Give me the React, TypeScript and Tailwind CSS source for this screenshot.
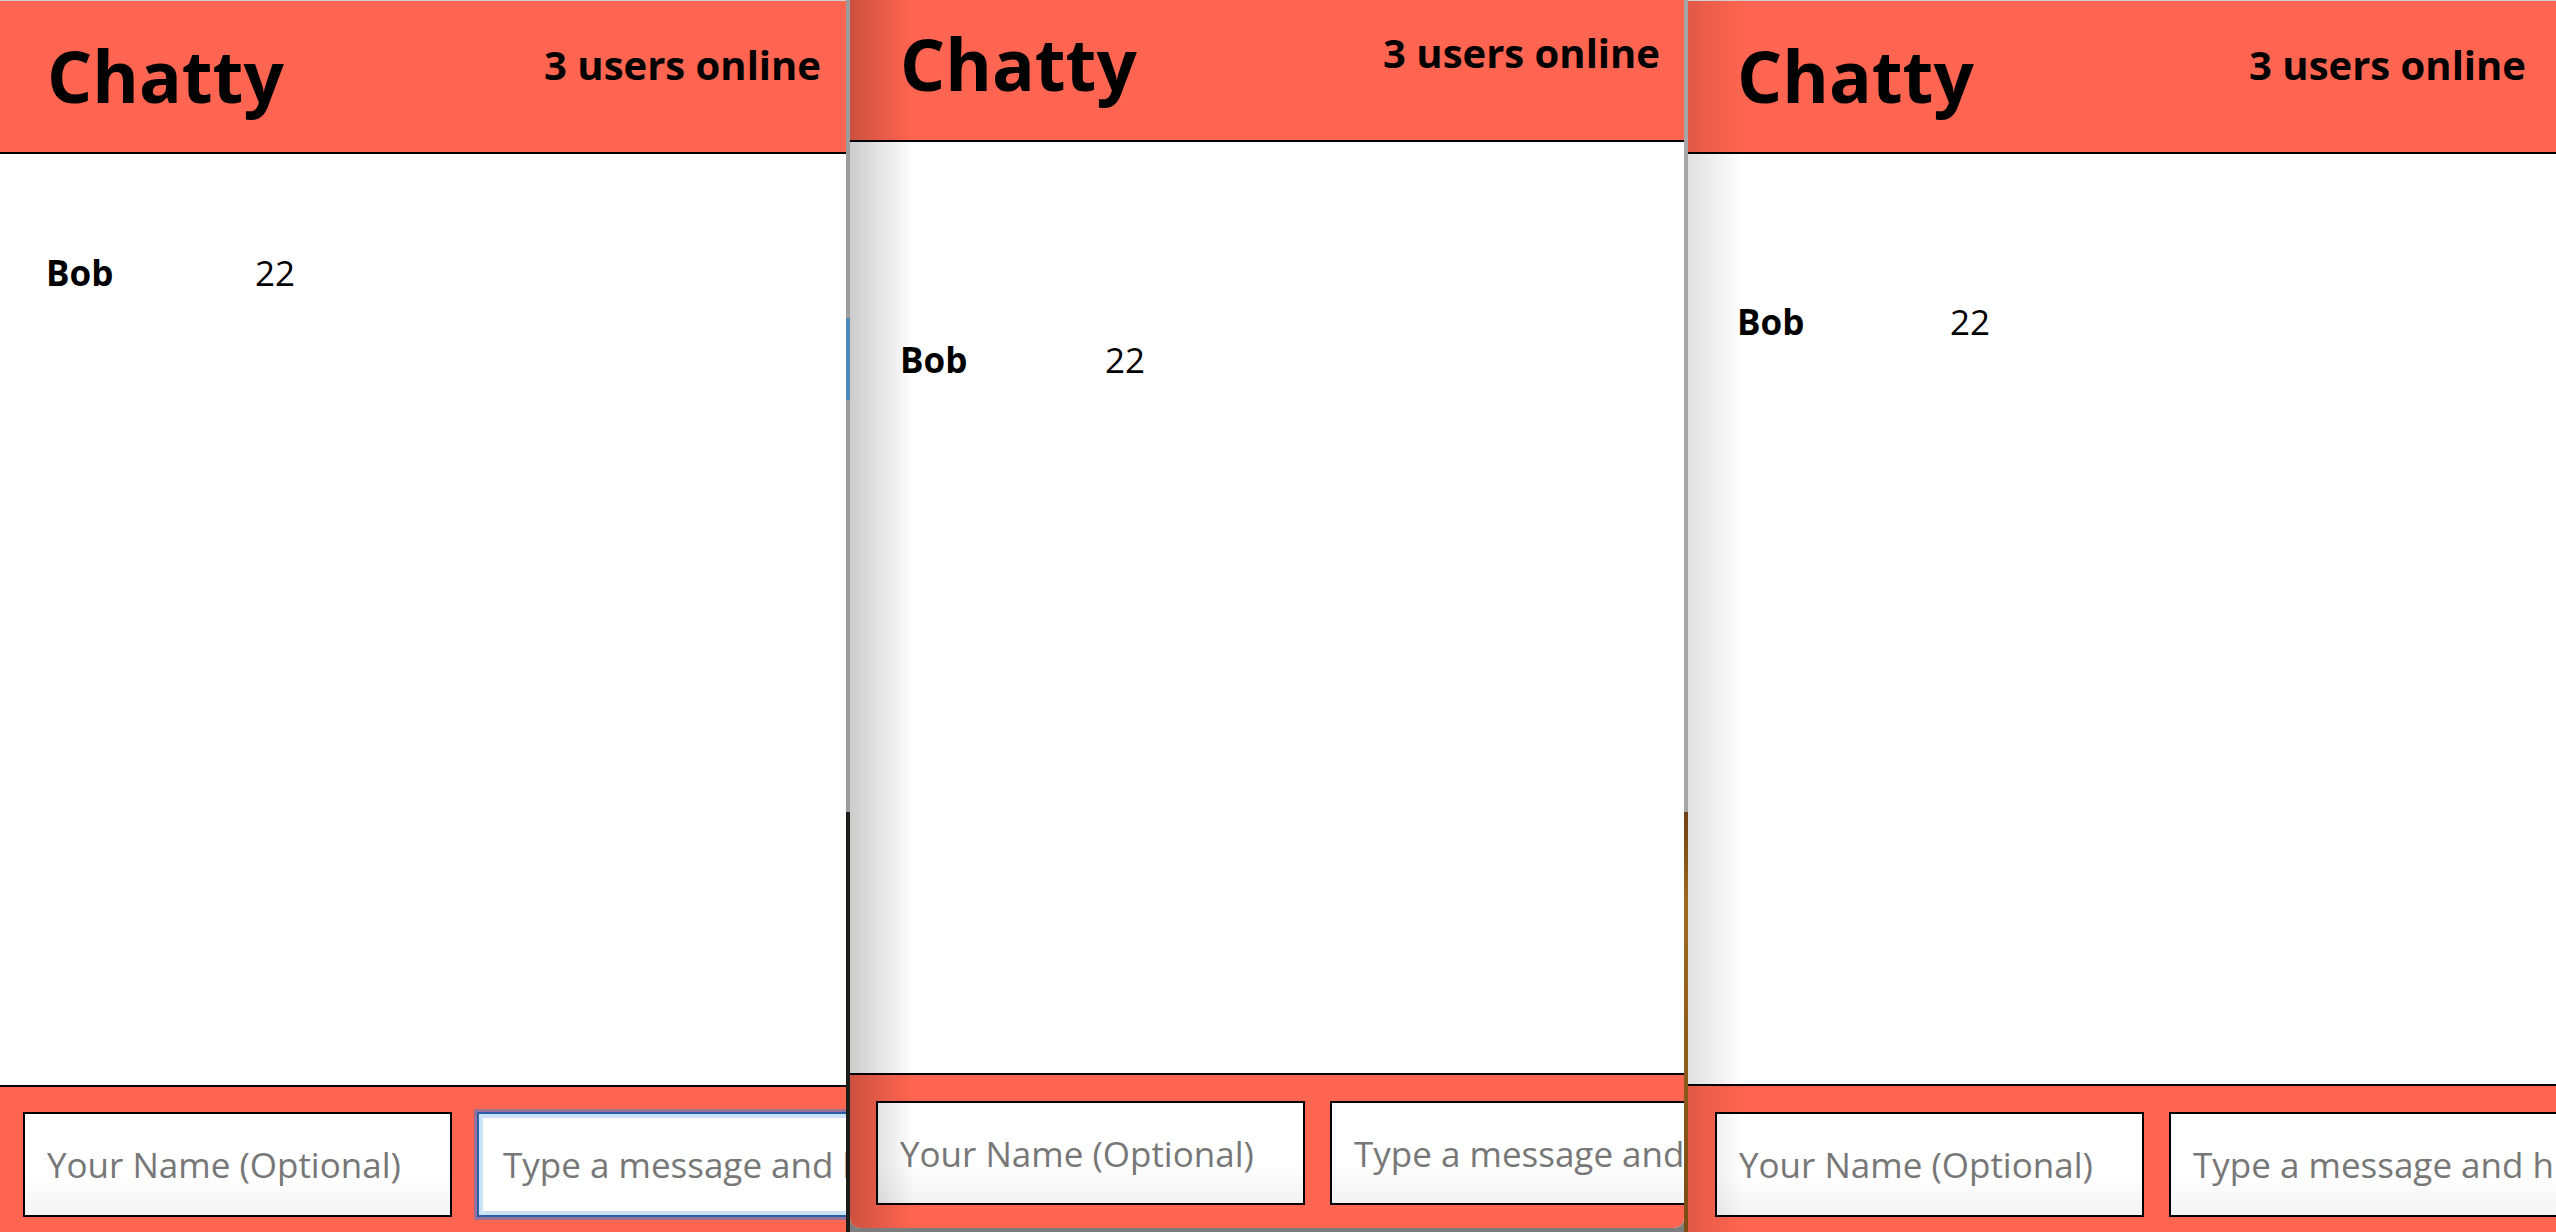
import React from 'react';

type ChatWindowProps = {
  frameClass: string
  headerClass: string
  usersClass: string
  listClass: string
  userColClass: string
  footerClass: string
  inputClass: string
  focused?: boolean
  shadeClass?: string
}

function ChatWindow({
  frameClass,
  headerClass,
  usersClass,
  listClass,
  userColClass,
  footerClass,
  inputClass,
  focused,
  shadeClass,
}: ChatWindowProps) {
  return (
    <div className={`relative flex flex-col overflow-hidden bg-white ${frameClass}`}>
      <header className={`flex shrink-0 items-start justify-between border-b-2 border-b-black bg-[#ff6550] ${headerClass}`}>
        <h1 className="text-[71px] font-bold leading-none text-black">Chatty</h1>
        <span className={`text-[40px] font-bold leading-none text-black ${usersClass}`}>3 users online</span>
      </header>

      <main className={`flex-1 ${listClass}`}>
        <div className="flex text-[35px] leading-none text-black">
          <span className={`font-bold ${userColClass}`}>Bob</span>
          <span>22</span>
        </div>
      </main>

      <footer className={`flex shrink-0 gap-[25px] border-t-2 border-black bg-[#ff6550] ${footerClass}`}>
        <input
          className={`w-[429px] shrink-0 border-2 border-black bg-[linear-gradient(to_bottom,#ffffff_60%,#f3f3f3)] px-[22px] text-[35px] text-black outline-none placeholder:text-[#777777] ${inputClass}`}
          placeholder="Your Name (Optional)"
        />
        <input
          className={
            focused
              ? `w-[760px] shrink-0 border-2 border-[#2c5ea6] bg-white px-[24px] text-[35px] text-black shadow-[0_0_0_3px_rgba(96,122,190,0.65),inset_0_0_0_4px_#cbe2f8] outline-none placeholder:text-[#777777] ${inputClass}`
              : `w-[760px] shrink-0 border-2 border-black bg-[linear-gradient(to_bottom,#ffffff_60%,#f3f3f3)] px-[22px] text-[35px] text-black outline-none placeholder:text-[#777777] ${inputClass}`
          }
          placeholder="Type a message and hit ENTER"
        />
      </footer>

      {shadeClass && (
        <div className={`pointer-events-none absolute inset-y-0 left-0 bg-linear-to-r to-transparent ${shadeClass}`} />
      )}
    </div>
  );
}

export default function App() {
  return (
    <div className="flex h-[1232px] w-[2556px] overflow-hidden bg-[#1c1b17] font-['Open_Sans',sans-serif]">
      <ChatWindow
        frameClass="h-full w-[846px] shrink-0 border-t border-t-[#d0d0d0]"
        headerClass="h-[153px] pl-[47px] pr-[25px] pt-[39px]"
        usersClass="mt-[5px]"
        listClass="pl-[46px] pt-[101px]"
        userColClass="w-[209px]"
        footerClass="h-[147px] pl-[23px] pt-[25px]"
        inputClass="h-[105px]"
        focused
      />

      <div className="w-[4px] shrink-0 bg-[linear-gradient(to_bottom,#9c9c9c_0px,#9c9c9c_318px,#4f89b6_318px,#4f89b6_400px,#9c9c9c_400px,#9c9c9c_812px,#1d1c18_812px)]" />

      <div className="flex h-full w-[834px] shrink-0 flex-col bg-[#7d7d7d]">
        <ChatWindow
          frameClass="h-[1228px] shrink-0 rounded-b-[10px]"
          headerClass="h-[142px] pl-[50px] pr-[24px] pt-[28px]"
          usersClass="mt-[5px]"
          listClass="pl-[50px] pt-[200px]"
          userColClass="w-[205px]"
          footerClass="h-[155px] pl-[26px] pt-[26px]"
          inputClass="h-[104px]"
          shadeClass="w-[64px] from-black/20"
        />
      </div>

      <div className="w-[4px] shrink-0 bg-[linear-gradient(to_bottom,#a6a6a6_0px,#a6a6a6_812px,#6e3f12_812px,#9c6a1e_900px,#7a4c14_1232px)]" />

      <ChatWindow
        frameClass="h-full flex-1 border-t border-t-[#d0d0d0]"
        headerClass="h-[153px] pl-[49px] pr-[30px] pt-[39px]"
        usersClass="mt-[5px]"
        listClass="pl-[49px] pt-[150px]"
        userColClass="w-[213px]"
        footerClass="h-[148px] pl-[27px] pt-[26px]"
        inputClass="h-[105px]"
        shadeClass="w-[56px] from-black/12"
      />
    </div>
  );
}
